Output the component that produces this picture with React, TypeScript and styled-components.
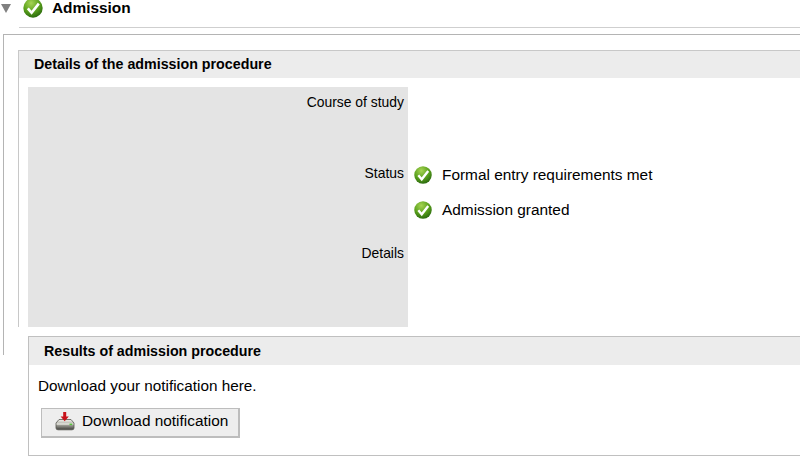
import React from "react";
import styled, { createGlobalStyle } from "styled-components";

const GlobalStyle = createGlobalStyle`
  html, body {
    margin: 0;
    padding: 0;
    background: #ffffff;
    overflow: hidden;
  }
  body {
    font-family: "Liberation Sans", Arial, sans-serif;
    color: #000000;
  }
`;

function CheckIcon({ id, size }: { id: string; size: number }) {
  return (
    <svg width={size} height={size} viewBox="0 0 20 20">
      <defs>
        <radialGradient id={id} cx="40%" cy="25%" r="80%">
          <stop offset="0%" stopColor="#a6d453" />
          <stop offset="55%" stopColor="#5aa01c" />
          <stop offset="100%" stopColor="#25640d" />
        </radialGradient>
      </defs>
      <circle cx="10" cy="10" r="9.7" fill={`url(#${id})`} />
      <path d="M4.8 10.4 L8.6 14.8 L15.8 5.6" fill="none" stroke="#ffffff" strokeWidth="2.6" />
    </svg>
  );
}

function DownloadIcon() {
  return (
    <svg width="20" height="20" viewBox="0 0 20 20">
      <defs>
        <linearGradient id="driveBody" x1="0" y1="0" x2="0" y2="1">
          <stop offset="0%" stopColor="#f2f2ec" />
          <stop offset="50%" stopColor="#a8a8a0" />
          <stop offset="100%" stopColor="#3e3e3a" />
        </linearGradient>
      </defs>
      <path d="M1 12 L4 8.5 H16 L19 12 V17 Q19 18.8 17 18.8 H3 Q1 18.8 1 17 Z" fill="url(#driveBody)" stroke="#55554f" strokeWidth="0.8" />
      <path d="M1.6 13 H18.4" stroke="#f7f7f2" strokeWidth="1" />
      <rect x="14.5" y="12.6" width="2.8" height="1.5" fill="#58c43c" />
      <path d="M8.2 1 H11.2 V5.4 H13.8 L9.7 10.2 L5.6 5.4 H8.2 Z" fill="#c8121a" />
    </svg>
  );
}

export default function App() {
  return (
    <Page>
      <GlobalStyle />
      <TitleRow>
        <Triangle />
        <CheckIcon id="titleCheck" size={20} />
        <Title>Admission</Title>
      </TitleRow>
      <Frame>
        <DetailsBox>
          <SectionHeader>Details of the admission procedure</SectionHeader>
          <DetailsGrid>
            <Labels>
              <LabelCourse>Course of study</LabelCourse>
              <LabelStatus>Status</LabelStatus>
              <LabelDetails>Details</LabelDetails>
            </Labels>
            <StatusList>
              <StatusRow>
                <CheckIcon id="statusCheckA" size={18} />
                Formal entry requirements met
              </StatusRow>
              <StatusRow>
                <CheckIcon id="statusCheckB" size={18} />
                Admission granted
              </StatusRow>
            </StatusList>
          </DetailsGrid>
        </DetailsBox>
        <ResultsBox>
          <ResultsHeader>Results of admission procedure</ResultsHeader>
          <ResultsBody>
            <Message>Download your notification here.</Message>
            <DownloadButton>
              <DownloadIcon />
              Download notification
            </DownloadButton>
          </ResultsBody>
        </ResultsBox>
      </Frame>
    </Page>
  );
}

const Page = styled.div`
  width: 800px;
  height: 456px;
  overflow: hidden;
`;

const TitleRow = styled.div`
  position: relative;
  display: flex;
  align-items: center;
  gap: 9px;
  height: 16px;
  margin-left: 19px;
  padding: 0 0 11px 4px;
  border-bottom: 1px solid #cfcfcf;
`;

const Triangle = styled.span`
  position: absolute;
  left: -18px;
  top: 4px;
  width: 0;
  height: 0;
  border-left: 5px solid transparent;
  border-right: 5px solid transparent;
  border-top: 9px solid #808080;
`;

const Title = styled.h1`
  margin: 0;
  font-size: 15.4px;
  font-weight: bold;
  line-height: 16px;
`;

const Frame = styled.div`
  margin: 6px 0 0 3px;
  height: 321px;
  box-sizing: border-box;
  border-top: 1px solid #b4b4b4;
  border-left: 1px solid #b4b4b4;
  padding: 15px 0 0 14px;
`;

const DetailsBox = styled.section`
  height: 277px;
  box-sizing: border-box;
  border-top: 1px solid #c8c8c8;
  border-left: 1px solid #c8c8c8;
  margin-right: -10px;
`;

const SectionHeader = styled.h2`
  margin: 0;
  height: 27px;
  padding-left: 15px;
  background: #ececec;
  font-size: 14.25px;
  font-weight: bold;
  line-height: 26px;
`;

const DetailsGrid = styled.div`
  display: flex;
  margin: 9px 0 0 9px;
  height: 240px;
`;

const Labels = styled.div`
  display: flex;
  flex-direction: column;
  box-sizing: border-box;
  width: 380px;
  padding-right: 4px;
  background: #e4e4e4;
  font-size: 13.9px;
  text-align: right;
`;

const LabelCourse = styled.div`
  margin-top: 8px;
  line-height: 15px;
`;

const LabelStatus = styled.div`
  margin-top: 56px;
  line-height: 15px;
`;

const LabelDetails = styled.div`
  margin-top: 65px;
  line-height: 15px;
`;

const StatusList = styled.div`
  display: flex;
  flex-direction: column;
  gap: 15px;
  padding: 78px 0 0 6px;
`;

const StatusRow = styled.div`
  display: flex;
  align-items: center;
  gap: 10px;
  height: 20px;
  font-size: 15.4px;
`;

const ResultsBox = styled.section`
  position: relative;
  box-sizing: border-box;
  height: 120px;
  margin: 9px -10px 0 10px;
  background: #ffffff;
  border: 1px solid #c0c0c0;
  border-right: 0;
`;

const ResultsHeader = styled(SectionHeader)`
  height: 28px;
  line-height: 29px;
`;

const ResultsBody = styled.div`
  padding: 13px 0 0 9px;
`;

const Message = styled.p`
  margin: 0;
  font-size: 15.3px;
  line-height: 16px;
`;

const DownloadButton = styled.button`
  display: flex;
  align-items: center;
  gap: 7px;
  box-sizing: border-box;
  width: 199px;
  height: 30px;
  margin: 14px 0 0 3px;
  padding: 0 0 3px 13px;
  background: #eeeeee;
  border: 1px solid #bdbdbd;
  border-width: 1px 2px 2px 1px;
  font-family: inherit;
  font-size: 15.4px;
  color: #000000;
`;
